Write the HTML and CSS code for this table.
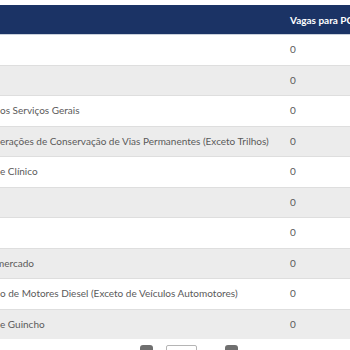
FILE: index.html
```html
<!DOCTYPE html>
<html lang="pt-BR">
<head>
<meta charset="utf-8">
<title>Vagas</title>
<link rel="stylesheet" href="styles.css">
</head>
<body>
<div class="page">
  <table class="vagas">
    <thead>
      <tr>
        <th class="c-cargo"></th>
        <th class="c-num">Vagas para PCD</th>
      </tr>
    </thead>
    <tbody>
      <tr><td class="c-cargo"></td><td class="c-num">0</td></tr>
      <tr><td class="c-cargo"></td><td class="c-num">0</td></tr>
      <tr><td class="c-cargo">os Serviços Gerais</td><td class="c-num">0</td></tr>
      <tr><td class="c-cargo">erações de Conservação de Vias Permanentes (Exceto Trilhos)</td><td class="c-num">0</td></tr>
      <tr><td class="c-cargo">e Clínico</td><td class="c-num">0</td></tr>
      <tr><td class="c-cargo"></td><td class="c-num">0</td></tr>
      <tr><td class="c-cargo"></td><td class="c-num">0</td></tr>
      <tr><td class="c-cargo"><span class="cut">mercado</span></td><td class="c-num">0</td></tr>
      <tr><td class="c-cargo">o de Motores Diesel (Exceto de Veículos Automotores)</td><td class="c-num">0</td></tr>
      <tr><td class="c-cargo">e Guincho</td><td class="c-num">0</td></tr>
    </tbody>
  </table>
  <div class="pager">
    <span class="pg-btn"></span>
    <span class="pg-input"></span>
    <span class="pg-btn"></span>
  </div>
</div>
</body>
</html>
```
FILE: styles.css
```css
html, body {
  margin: 0;
  padding: 0;
  overflow: hidden;
  background: #ffffff;
}
body {
  font-family: Lato, "Open Sans", sans-serif;
  font-size: 10px;
  color: #5a5a5a;
}
.page {
  padding-top: 5px;
  width: 420px;
}
.vagas {
  border-collapse: collapse;
  width: 420px;
  table-layout: fixed;
}
.vagas th {
  background: #1b3365;
  color: #ffffff;
  font-weight: 700;
  text-align: left;
  height: 29px;
  padding: 0 8px;
  border-bottom: 1px solid #c9d0db;
  white-space: nowrap;
}
.vagas .c-cargo {
  width: 274px;
  padding-left: 0;
}
.vagas td {
  padding: 8px 8px 8px 8px;
  line-height: 13.5px;
  border-top: 1px solid #dedede;
  white-space: nowrap;
}
.vagas td.c-cargo {
  padding-left: 0;
}
.vagas tbody tr:nth-child(even) td {
  background: #ececec;
}
.vagas tbody tr:first-child td {
  border-top: none;
}
.cut {
  display: inline-block;
  margin-left: -4px;
}
.pager {
  display: flex;
  gap: 13px;
  margin-top: 6px;
  padding-left: 140px;
}
.pg-btn {
  width: 13px;
  height: 13px;
  background: #6f6f6f;
  border-radius: 3px;
}
.pg-input {
  width: 29px;
  height: 16px;
  border: 1px solid #b5b5b5;
  border-radius: 2px;
  margin-right: 15px;
}
```
